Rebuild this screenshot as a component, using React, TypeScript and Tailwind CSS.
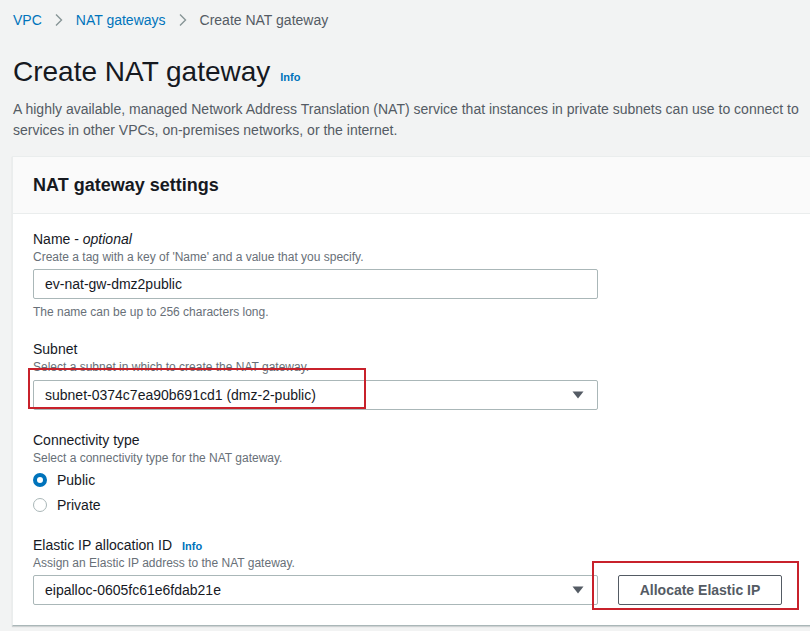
import React from "react";

const FONT = { fontFamily: '"Liberation Sans", Arial, sans-serif' };

function Chevron() {
  return (
    <svg width="8" height="14" viewBox="0 0 8 14" className="mx-[13px]">
      <path d="M1 1.5 L6.5 7 L1 12.5" fill="none" stroke="#879596" strokeWidth="1.4" />
    </svg>
  );
}

function Caret() {
  return (
    <svg width="12" height="8" viewBox="0 0 12 8">
      <path d="M0.5 0.5 H11.5 L6 7.5 Z" fill="#545b64" />
    </svg>
  );
}

function Radio({ checked, label }: { checked: boolean; label: string }) {
  return (
    <div className="flex items-center h-[24px]">
      {checked ? (
        <span className="w-[14px] h-[14px] rounded-full border-[4px] border-[#0073bb] bg-white box-border" />
      ) : (
        <span className="w-[14px] h-[14px] rounded-full border border-[#aab7b8] bg-white box-border" />
      )}
      <span className="ml-[10px] text-[14px] text-[#16191f]">{label}</span>
    </div>
  );
}

function Label({ children }: { children: React.ReactNode }) {
  return <div className="text-[14px] leading-[20px] text-[#16191f]">{children}</div>;
}

function Hint({ children }: { children: React.ReactNode }) {
  return <div className="text-[12px] leading-[16px] text-[#687078]">{children}</div>;
}

function SelectBox({ value }: { value: string }) {
  return (
    <div className="w-[565px] h-[30px] border border-[#aab7b8] rounded-[2px] bg-white flex items-center justify-between pl-[11px] pr-[13px] text-[14px] text-[#16191f]">
      <span>{value}</span>
      <Caret />
    </div>
  );
}

export default function App() {
  return (
    <div className="w-full h-[631px] overflow-hidden bg-[#f2f3f3] relative" style={FONT}>
      <div className="w-[1100px] pl-[13px]">
        {/* breadcrumb */}
        <div className="flex items-center h-[20px] mt-[10px] text-[14px]">
          <span className="text-[#0073bb]">VPC</span>
          <Chevron />
          <span className="text-[#0073bb]">NAT gateways</span>
          <Chevron />
          <span className="text-[#545b64]">Create NAT gateway</span>
        </div>

        <div className="flex items-baseline mt-[24px]">
          <h1 className="text-[28px] leading-[36px] text-[#16191f]">Create NAT gateway</h1>
          <span className="ml-[10px] text-[11px] font-bold text-[#0073bb]">Info</span>
        </div>

        <p className="mt-[9px] text-[14px] leading-[21px] text-[#545b64] w-[1000px]">
          A highly available, managed Network Address Translation (NAT) service that instances in private subnets can use to connect to
          <br />
          services in other VPCs, on-premises networks, or the internet.
        </p>

        {/* card */}
        <div className="mt-[15px] -ml-[1px] w-[1000px] bg-white border border-[#eaeded] border-b-[#aab7b8] shadow-[0_1px_1px_0_rgba(0,28,36,0.15)]">
          <div className="h-[57px] bg-[#fafafa] border-b border-[#eaeded] flex items-center px-[20px]">
            <h2 className="text-[18px] font-bold text-[#16191f]">NAT gateway settings</h2>
          </div>

          <div className="px-[20px] pt-[15px] pb-[20px]">
            <Label>
              Name - <i>optional</i>
            </Label>
            <Hint>Create a tag with a key of 'Name' and a value that you specify.</Hint>
            <div className="mt-[4px] w-[565px] h-[30px] border border-[#aab7b8] rounded-[2px] bg-white flex items-center pl-[11px] text-[14px] text-[#16191f]">
              ev-nat-gw-dmz2public
            </div>
            <div className="mt-[5px]">
              <Hint>The name can be up to 256 characters long.</Hint>
            </div>

            <div className="mt-[19px]">
              <Label>Subnet</Label>
            </div>
            <Hint>Select a subnet in which to create the NAT gateway.</Hint>
            <div className="mt-[5px]">
              <SelectBox value="subnet-0374c7ea90b691cd1 (dmz-2-public)" />
            </div>

            <div className="mt-[20px]">
              <Label>Connectivity type</Label>
            </div>
            <Hint>Select a connectivity type for the NAT gateway.</Hint>
            <div className="mt-[2px] flex flex-col gap-[1px]">
              <Radio checked label="Public" />
              <Radio checked={false} label="Private" />
            </div>

            <div className="mt-[18px] flex items-baseline">
              <Label>Elastic IP allocation ID</Label>
              <span className="ml-[10px] text-[11px] font-bold text-[#0073bb]">Info</span>
            </div>
            <Hint>Assign an Elastic IP address to the NAT gateway.</Hint>
            <div className="mt-[4px] flex items-center">
              <SelectBox value="eipalloc-0605fc61e6fdab21e" />
              <button className="ml-[20px] w-[164px] h-[30px] border border-[#545b64] rounded-[2px] bg-white text-[14px] font-bold text-[#545b64]">
                Allocate Elastic IP
              </button>
            </div>
          </div>
        </div>
      </div>

      {/* annotation boxes */}
      <div className="absolute left-[28px] top-[368px] w-[338px] h-[41px] border-2 border-[#c8212b]" />
      <div className="absolute left-[592px] top-[561px] w-[207px] h-[49px] border-2 border-[#c8212b]" />
    </div>
  );
}
